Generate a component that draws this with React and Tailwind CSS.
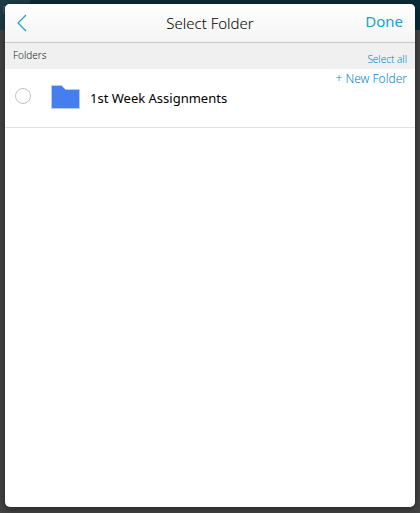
import { useState } from "react";

const folders = [{ id: "week-1", name: "1st Week Assignments" }];

function BackIcon() {
  return (
    <svg width="10" height="18" viewBox="0 0 10 18" fill="none" aria-hidden="true">
      <path d="M9 1 1 9l8 8" stroke="#1a9fd0" strokeWidth="1.2" />
    </svg>
  );
}

function FolderIcon() {
  return (
    <svg width="29" height="24" viewBox="0 0 29 24" aria-hidden="true">
      <path
        d="M.5.5h10l4 4h14v19H.5z"
        fill="#457eee"
        stroke="#b5cdf8"
        strokeWidth="1"
      />
      <path d="M1 1h9.3l4 4H28v18H1z" fill="#457eee" />
    </svg>
  );
}

function FolderRow({ folder, checked, onToggle }) {
  return (
    <label className="flex min-w-0 flex-1 items-start">
      <input
        type="checkbox"
        checked={checked}
        onChange={() => onToggle(folder.id)}
        className="mt-[3px] size-4 shrink-0 appearance-none rounded-full border border-[#c4c4c4] bg-white checked:border-[#1a9fd0] checked:bg-[#1a9fd0]"
      />
      <span className="ml-5 shrink-0">
        <FolderIcon />
      </span>
      <span className="mt-[3px] ml-2.5 truncate text-[13px] leading-5 text-black">
        {folder.name}
      </span>
    </label>
  );
}

export default function App() {
  const [selected, setSelected] = useState([]);

  const toggle = (id) => {
    setSelected((prev) =>
      prev.includes(id) ? prev.filter((x) => x !== id) : [...prev, id]
    );
  };

  return (
    <div className="relative flex min-h-screen flex-col bg-[#444444] px-[5px] pt-1 pb-1.5 font-['Noto_Sans',sans-serif]">
      {/* dimmed page behind the dialog */}
      <div className="absolute inset-x-0 top-0 h-[30px] bg-[#0a2c38]" aria-hidden="true">
        <div className="h-full w-[30px] bg-[#1d3d48] pt-0.5 pl-0.5 text-[10px] leading-4 text-[#4d6069]">
          F
        </div>
      </div>

      <div
        role="dialog"
        aria-labelledby="dialog-title"
        className="relative flex flex-1 flex-col overflow-hidden rounded-[5px] bg-white shadow-[0_2px_8px_rgba(0,0,0,0.5)]"
      >
        <header className="grid h-[39px] grid-cols-[1fr_auto_1fr] items-center border-b border-[#c8c8c8] bg-linear-to-b from-white to-[#f4f4f4] px-3">
          <button type="button" aria-label="Back" className="justify-self-start">
            <BackIcon />
          </button>
          <h1 id="dialog-title" className="text-[15px] leading-5 font-light text-black">
            Select Folder
          </h1>
          <button
            type="button"
            className="justify-self-end pb-1 text-[15px] leading-5 text-[#1a9fd0]"
          >
            Done
          </button>
        </header>

        <div className="flex h-[26px] items-start justify-between bg-[#f0f0f0] px-2">
          <h2 className="pt-1 text-[10px] leading-4 font-light text-[#222222]">Folders</h2>
          <button
            type="button"
            onClick={() => setSelected(folders.map((f) => f.id))}
            className="pt-2 text-[10px] leading-4 font-light text-[#0089c0]"
          >
            Select all
          </button>
        </div>

        <div className="flex h-[59px] items-start border-b border-[#e2e2e2] pr-2 pl-2.5">
          <ul className="flex min-w-0 flex-1 pt-4">
            {folders.map((folder) => (
              <li key={folder.id} className="flex flex-1">
                <FolderRow
                  folder={folder}
                  checked={selected.includes(folder.id)}
                  onToggle={toggle}
                />
              </li>
            ))}
          </ul>
          <button
            type="button"
            className="text-[12px] leading-5 font-light text-[#0089c0]"
          >
            + New Folder
          </button>
        </div>
      </div>
    </div>
  );
}
